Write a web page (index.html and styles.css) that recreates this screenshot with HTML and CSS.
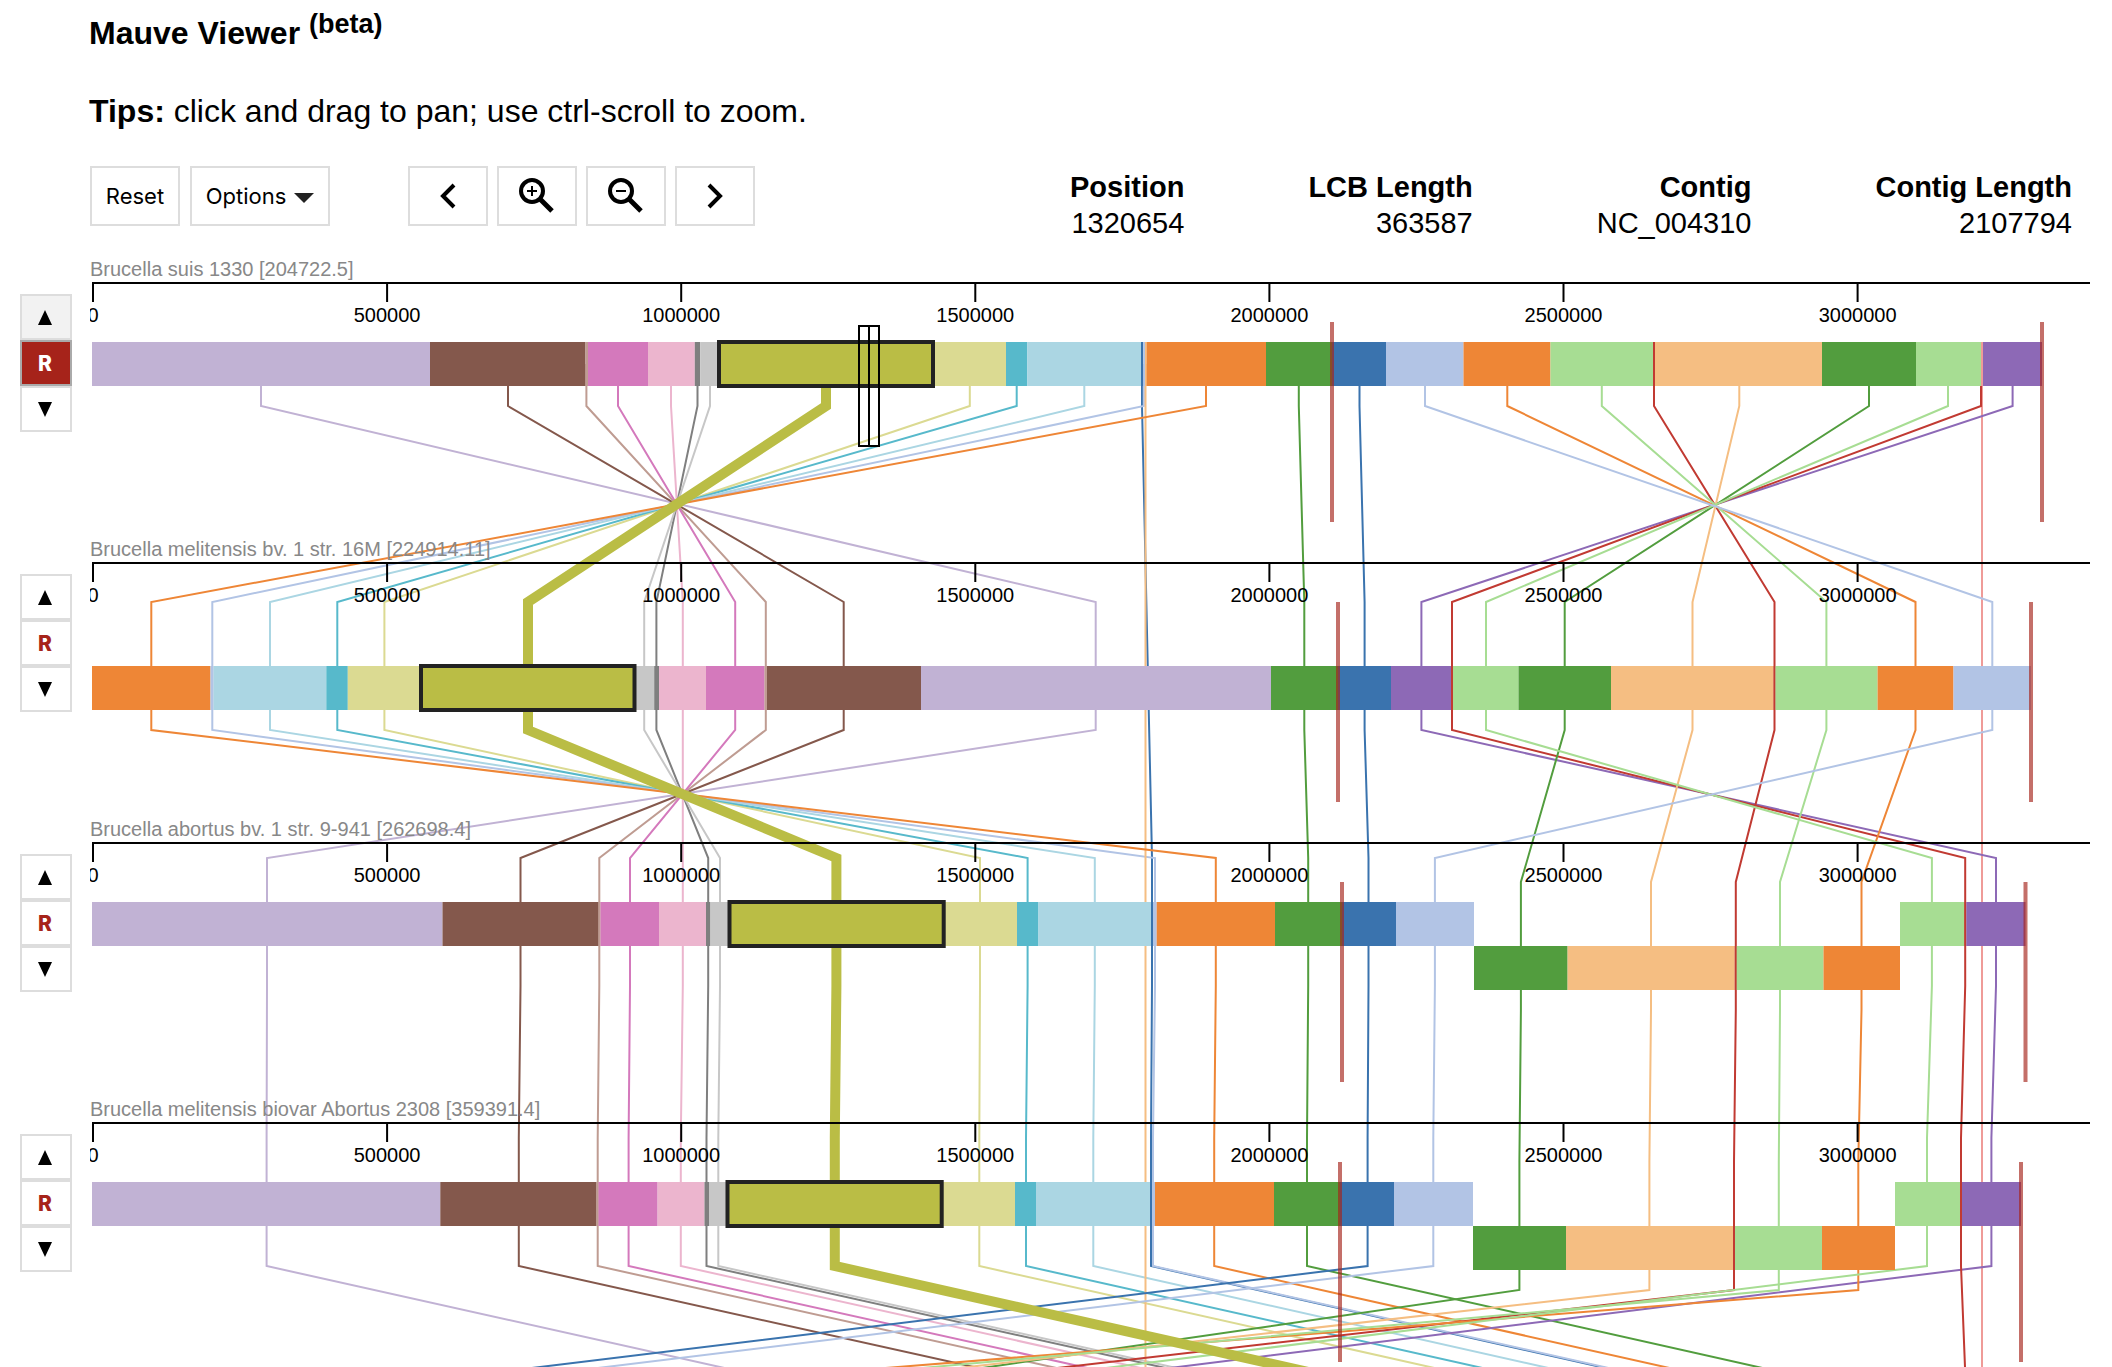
FILE: index.html
```html
<!DOCTYPE html>
<html lang="en">
<head>
<meta charset="utf-8">
<title>Mauve Viewer</title>
<link rel="stylesheet" href="styles.css">
</head>
<body>
<header class="intro">
  <h1 class="title">Mauve Viewer <sup class="beta">(beta)</sup></h1>
  <p class="tips"><b>Tips:</b> click and drag to pan; use ctrl-scroll to zoom.</p>
</header>

<div class="toolbar">
  <div class="group">
    <button class="btn" type="button">Reset</button>
    <button class="btn options" type="button">Options
      <svg class="caret" viewBox="0 0 20 10" aria-hidden="true"><path d="M0 0h20L10 10z"/></svg>
    </button>
  </div>
  <div class="group nav">
    <button class="btn icon" type="button" aria-label="Pan left"><svg viewBox="0 0 40 40"><path d="M26 9 15 20 26 31"/></svg></button>
    <button class="btn icon" type="button" aria-label="Zoom in"><svg viewBox="0 0 40 40"><circle cx="15" cy="15" r="11"/><path class="handle" d="M23 23 35 35"/><path class="sign" d="M10 15h10M15 10v10"/></svg></button>
    <button class="btn icon" type="button" aria-label="Zoom out"><svg viewBox="0 0 40 40"><circle cx="15" cy="15" r="11"/><path class="handle" d="M23 23 35 35"/><path class="sign" d="M10 15h10"/></svg></button>
    <button class="btn icon" type="button" aria-label="Pan right"><svg viewBox="0 0 40 40"><path d="M14 9 25 20 14 31"/></svg></button>
  </div>
  <dl class="info">
    <div><dt>Position</dt><dd>1320654</dd></div>
    <div><dt>LCB Length</dt><dd>363587</dd></div>
    <div><dt>Contig</dt><dd>NC_004310</dd></div>
    <div><dt>Contig Length</dt><dd>2107794</dd></div>
  </dl>
</div>

<main class="viewer">
  <div class="track-controls">
    <div class="track-buttons">
      <button class="tb" type="button" aria-label="Move up" disabled><svg viewBox="0 0 14 15"><path d="M7 0l7 15H0z"/></svg></button>
      <button class="tb ref active" type="button">R</button>
      <button class="tb" type="button" aria-label="Move down"><svg viewBox="0 0 14 15"><path d="M0 0h14L7 15z"/></svg></button>
    </div>
    <div class="track-buttons">
      <button class="tb" type="button" aria-label="Move up"><svg viewBox="0 0 14 15"><path d="M7 0l7 15H0z"/></svg></button>
      <button class="tb ref" type="button">R</button>
      <button class="tb" type="button" aria-label="Move down"><svg viewBox="0 0 14 15"><path d="M0 0h14L7 15z"/></svg></button>
    </div>
    <div class="track-buttons">
      <button class="tb" type="button" aria-label="Move up"><svg viewBox="0 0 14 15"><path d="M7 0l7 15H0z"/></svg></button>
      <button class="tb ref" type="button">R</button>
      <button class="tb" type="button" aria-label="Move down"><svg viewBox="0 0 14 15"><path d="M0 0h14L7 15z"/></svg></button>
    </div>
    <div class="track-buttons">
      <button class="tb" type="button" aria-label="Move up"><svg viewBox="0 0 14 15"><path d="M7 0l7 15H0z"/></svg></button>
      <button class="tb ref" type="button">R</button>
      <button class="tb" type="button" aria-label="Move down"><svg viewBox="0 0 14 15"><path d="M0 0h14L7 15z"/></svg></button>
    </div>
  </div>
  <svg class="chart" id="chart" viewBox="90 250 2000 1117" role="img" aria-label="Genome alignment"></svg>
</main>
<script src="chart.js"></script>
</body>
</html>
```
FILE: styles.css
```css
* { box-sizing: border-box; }

body {
  margin: 0;
  background: #fff;
  color: #000;
  font-family: "Liberation Sans", Arial, sans-serif;
  overflow-x: hidden;
}

.intro { padding: 14px 89px 0; }

.title {
  margin: 0;
  font-size: 32px;
  line-height: 38px;
}

.beta {
  font-size: 27px;
  line-height: 0;
  vertical-align: 11px;
}

.tips {
  margin: 40px 0 0;
  font-size: 32px;
  line-height: 38px;
}

.toolbar {
  display: flex;
  align-items: flex-start;
  height: 60px;
  margin: 36px 40px 0 90px;
}

.group { display: flex; gap: 10px; }
.nav { gap: 9px; margin-left: 78px; }

.btn {
  display: flex;
  align-items: center;
  justify-content: center;
  gap: 8px;
  width: 90px;
  height: 60px;
  padding: 0;
  border: 2px solid #ddd;
  background: #fff;
  color: #000;
  font: 22px Inter, sans-serif;
}

.options { width: 140px; }
.caret { width: 20px; height: 10px; margin-top: 4px; fill: #222; }
.icon { width: 80px; }

.icon svg {
  width: 40px;
  height: 40px;
  fill: none;
  stroke: #000;
  stroke-width: 4;
}

.icon .sign { stroke-width: 2; }
.icon .handle { stroke-width: 5; }

.info {
  display: flex;
  gap: 124px;
  margin: 3px 0 0 auto;
  font-size: 29px;
  line-height: 36px;
  text-align: right;
}

.info dt { font-weight: bold; }
.info dd { margin: 0; }

.viewer {
  display: flex;
  align-items: flex-start;
  gap: 18px;
  margin-top: 24px;
  padding: 0 22px 0 20px;
}

.track-controls {
  display: flex;
  flex-direction: column;
  gap: 142px;
  padding-top: 44px;
}

.track-buttons { display: flex; flex-direction: column; }

.tb {
  display: flex;
  align-items: center;
  justify-content: center;
  width: 52px;
  height: 46px;
  padding: 1px 2px 0 0;
  border: 2px solid #ddd;
  background: #fff;
  font: 800 21px Inter, sans-serif;
}

.tb svg { width: 14px; height: 15px; fill: #000; }
.tb:disabled { background: #f2f2f2; }
.ref { color: #a6231a; }
.ref.active { background: #a6231a; border-color: #aaa; color: #fff; }

.chart { display: block; flex: 1; min-width: 0; height: auto; overflow: hidden; }
.link { fill: none; stroke-width: 2; }
.link.selected { stroke-width: 10; }
.block.selected { stroke: #222; stroke-width: 4; }
.axis { fill: none; stroke: #000; stroke-width: 2; }
.tick { font-size: 20px; text-anchor: middle; }
.name { font-size: 20px; fill: #888; }
.contig { stroke: #a6231a; stroke-width: 4; opacity: .65; }
.cursor { fill: none; stroke: #000; stroke-width: 2; }
```
FILE: chart.js
```js
const C = {
  lav: '#c1b2d4', brown: '#84584c', tan: '#bf9c92', mag: '#d479bc', pink: '#ecb5ce',
  gray: '#7f7f7f', lgray: '#c7c7c7', olive: '#babd45', khaki: '#dbda92', cyan: '#57b9cb',
  sky: '#abd6e3', peri: '#b2c4e5', orange: '#ee8636', blue: '#3a73ae', green: '#529d3e',
  lgreen: '#a7dd93', red: '#c13a32', peach: '#f5be82', purple: '#8d69b6', rose: '#ef9b98'
};

// Each track: name, axis y, contig ends, forward blocks, reverse blocks.
// Blocks run as [start, color, end, color, end, ...].
const tracks = [
  { name: 'Brucella suis 1330 [204722.5]', y: 283, contigs: [1332, 2042],
    fwd: [92, 'lav', 430, 'brown', 585.5, 'tan', 588, 'mag', 648, 'pink', 694.8, 'gray', 700.2, 'lgray', 719,
      'olive', 933, 'khaki', 1006, 'cyan', 1027.4, 'sky', 1141, 'blue', 1143.2, 'peri', 1145, 'peach', 1146.5,
      'orange', 1266, 'green', 1332, 'blue', 1386, 'peri', 1463.5, 'orange', 1550.5, 'lgreen', 1653, 'red', 1655,
      'peach', 1822, 'green', 1916, 'lgreen', 1981, 'rose', 1983, 'purple', 2042], rev: [] },
  { name: 'Brucella melitensis bv. 1 str. 16M [224914.11]', y: 563, contigs: [1338, 2031], fwd: [],
    rev: [92, 'orange', 210.5, 'peri', 213.5, 'sky', 326.3, 'cyan', 347.8, 'khaki', 421, 'olive', 634.5, 'lgray', 654.2,
      'gray', 659, 'pink', 706, 'mag', 764.5, 'tan', 767, 'brown', 921, 'lav', 1271, 'green', 1338, 'blue', 1391,
      'purple', 1451, 'red', 1453, 'lgreen', 1518.5, 'green', 1611, 'peach', 1773.5, 'red', 1775.5, 'lgreen', 1877.6,
      'orange', 1953.5, 'peri', 2031] },
  { name: 'Brucella abortus bv. 1 str. 9-941 [262698.4]', y: 843, contigs: [1342, 2025.5],
    fwd: [92, 'lav', 442.5, 'brown', 598.5, 'tan', 600.5, 'mag', 659, 'pink', 706, 'gray', 710.5, 'lgray', 729.5,
      'olive', 943.7, 'khaki', 1017, 'cyan', 1038.5, 'sky', 1151, 'blue', 1153, 'peri', 1156.7, 'orange', 1275,
      'green', 1342, 'blue', 1396, 'peri', 1474, null, 1900, 'lgreen', 1964.3, 'red', 1966.3, 'purple', 2025.5],
    rev: [1474, 'green', 1567.6, 'peach', 1734.7, 'red', 1736.7, 'lgreen', 1823.5, 'orange', 1900] },
  { name: 'Brucella melitensis biovar Abortus 2308 [359391.4]', y: 1123, contigs: [1340, 2021],
    fwd: [92, 'lav', 440.3, 'brown', 596.5, 'tan', 598.5, 'mag', 657.6, 'pink', 704.5, 'gray', 709, 'lgray', 727.5,
      'olive', 941.7, 'khaki', 1015, 'cyan', 1036, 'sky', 1150, 'blue', 1152, 'peri', 1155, 'orange', 1274,
      'green', 1340, 'blue', 1394, 'peri', 1473, null, 1895, 'lgreen', 1960, 'red', 1962, 'purple', 2021],
    rev: [1473, 'green', 1566, 'peach', 1733, 'red', 1735, 'lgreen', 1822, 'orange', 1895] }
];

// Each link: color, x on tracks 1-4, x at the lower edge, true when reversed on tracks 3-4.
const links = [
  ['lav', 261, 1095.7, 267, 266.6, 720],
  ['brown', 508, 843.7, 520.5, 518.8, 974],
  ['tan', 586.4, 765.8, 599.3, 597.7, 1052],
  ['mag', 618, 735.2, 630, 628.6, 1083],
  ['pink', 671, 682.8, 682.8, 680.8, 1136],
  ['gray', 697.5, 656.4, 708.2, 706.5, 1161],
  ['lgray', 710, 644.2, 720, 718.3, 1172],
  ['khaki', 969.8, 384.4, 980, 979.3, 1430],
  ['cyan', 1016.7, 337.3, 1027.6, 1026, 1478],
  ['sky', 1084.3, 270, 1094.8, 1093.3, 1544],
  ['blue', 1142, null, 1152, 1151, 1601],
  ['peri', 1143.8, 212.3, 1155, 1153, 1604],
  ['orange', 1206, 151.3, 1215.8, 1214.2, 1665],
  ['green', 1298.8, 1304.3, 1308.2, 1307, 1758],
  ['blue', 1359.5, 1364.6, 1368.5, 1367.6, 540],
  ['purple', 2012.6, 1421.4, 1996, 1991.4, 1178],
  ['red', 1981, 1452, 1965.2, 1961, 1965],
  ['green', 1869, 1564.7, 1520.9, 1519.4, 989, true],
  ['red', 1654, 1774.5, 1735.8, 1734, 1066, true],
  ['orange', 1507.3, 1915.5, 1861.5, 1858.3, 898, true],
  ['peach', 1739.3, 1692.5, 1651, 1649.4, 968, true],
  ['lgreen', 1601.8, 1826.4, 1780, 1778.8, 933, true],
  ['lgreen', 1948, 1486, 1931.9, 1927, 1114],
  ['peri', 1425, 1992.3, 1434.9, 1433.3, 606],
  ['olive', 826, 528, 836.4, 834.8, 1286]
];

const chart = document.getElementById('chart');
function add(tag, attrs, text) {
  const el = document.createElementNS('http://www.w3.org/2000/svg', tag);
  for (const k in attrs) el.setAttribute(k, attrs[k]);
  if (text) el.textContent = text;
  chart.appendChild(el);
}

for (const [color, a, b, c, d, e, rev] of links) {
  const pts = [[a, 364], [a, 406]];
  if (b !== null) pts.push([b, 602], [b, 730]);
  pts.push([c, rev ? 882 : 858], [c, rev ? 1010 : 986]);
  const bend = rev ? 1290 : 1266;
  // The last leg runs on past the lower edge, towards the next track.
  pts.push([d, rev ? 1162 : 1138], [d, bend], [d + (e - d) * 1.2, bend + (1367 - bend) * 1.2]);
  add('path', { class: color === 'olive' ? 'link selected' : 'link', stroke: C[color], d: 'M' + pts.join('L') });
  if (color === 'peri' && a < 1200) {
    add('path', { class: 'link', stroke: C.peach, d: 'M1145.5 364V1367' });
    add('path', { class: 'link', stroke: C.rose, d: 'M1982 364V1367' });
  }
}

function row(list, y) {
  for (let i = 0; i + 2 < list.length; i += 2) {
    const color = list[i + 1];
    if (!color || color === 'olive') continue;
    add('rect', { class: 'block', x: list[i], y, width: list[i + 2] - list[i], height: 44, fill: C[color] });
  }
  const s = list.indexOf('olive');
  if (s > 0) {
    add('rect', { class: 'block selected', x: list[s - 1], y, width: list[s + 1] - list[s - 1], height: 44, fill: C.olive });
  }
}

for (const t of tracks) {
  row(t.fwd, t.y + 59);
  row(t.rev, t.y + 103);
  add('text', { class: 'name', x: 90, y: t.y - 7 }, t.name);
  let d = `M92 ${t.y}H2090`;
  for (let i = 0; i < 7; i++) {
    const x = 93 + i * 294.1;
    d += `M${x} ${t.y}v19`;
    add('text', { class: 'tick', x, y: t.y + 39 }, String(i * 500000));
  }
  add('path', { class: 'axis', d });
  for (const x of t.contigs) add('path', { class: 'contig', d: `M${x} ${t.y + 39}v200` });
}

add('rect', { class: 'cursor', x: 859, y: 326, width: 20, height: 120 });
add('path', { class: 'cursor', d: 'M869 326v120' });
```
